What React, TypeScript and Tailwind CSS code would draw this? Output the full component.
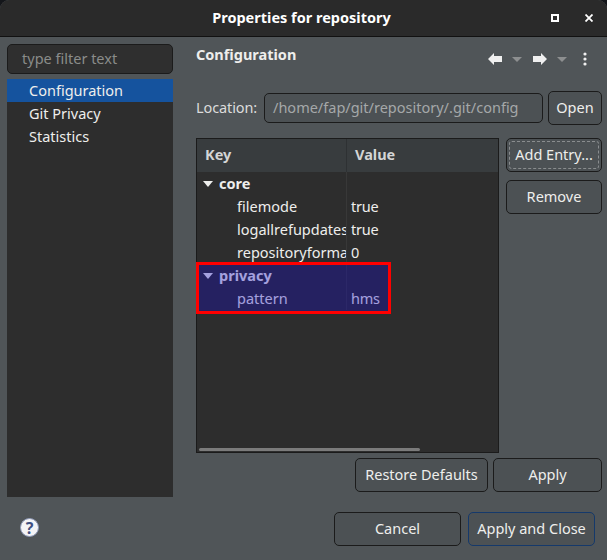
import React from "react";

function Btn({ children, className = "" }: { children: React.ReactNode; className?: string }) {
  return (
    <div className={"flex items-center justify-center rounded-[5px] border border-[#1b1b1b] bg-[#4c5154] text-[#eeeeec] text-[14.5px] h-[34px] " + className}>
      {children}
    </div>
  );
}

function Row({ k, v, bold }: { k: string; v?: string; bold?: boolean }) {
  return (
    <div className="flex h-[23px] items-center text-[14.5px] text-[#eeeeec]">
      <div className="w-[150px] shrink-0 overflow-hidden whitespace-nowrap flex items-center border-r border-[#383838] h-full">
        {bold ? (
          <>
            <svg width="10" height="6" viewBox="0 0 10 6" className="ml-[6px] mr-[6px] shrink-0"><path d="M0 0H10L5 6Z" fill="currentColor" /></svg>
            <span className="font-bold">{k}</span>
          </>
        ) : (
          <span className="ml-[40px]">{k}</span>
        )}
      </div>
      <div className="pl-[4px] tracking-[-0.2px]">{v}</div>
    </div>
  );
}

export default function App() {
  return (
    <div className="w-[607px] h-[560px] bg-[#14161a] font-['Noto_Sans',sans-serif] overflow-hidden">
      <div className="relative w-[607px] h-[560px] rounded-t-[9px] bg-[#505558] overflow-hidden flex flex-col">
        <div className="relative h-[37px] shrink-0 flex items-center justify-center pr-[4px] bg-[#2a2a2a] border-b border-[#111111] text-white font-bold text-[14.5px]">
          Properties for repository
          <div className="absolute right-[14px] top-0 h-full flex items-center gap-[26px]">
            <svg width="8" height="8" viewBox="0 0 8 8"><rect x="1" y="1" width="6" height="6" fill="none" stroke="#fff" strokeWidth="2" /></svg>
            <svg width="8" height="8" viewBox="0 0 8 8"><path d="M0.5 0.5L7.5 7.5M7.5 0.5L0.5 7.5" stroke="#fff" strokeWidth="1.8" /></svg>
          </div>
        </div>

        <div className="flex flex-1 min-h-0">
          {/* left */}
          <div className="w-[166px] ml-[7px] mt-[7px] mb-[63px] flex flex-col shrink-0">
            <div className="h-[30px] rounded-[5px] border border-[#1b1b1b] bg-[#2f2f2f] flex items-center pl-[14px] text-[14.5px] text-[#8a8c8a]">
              type filter text
            </div>
            <div className="mt-[5px] flex-1 bg-[#2d2d2d] text-[14.5px] text-[#eeeeec]">
              <div className="h-[23px] bg-[#15539e] pl-[22px] flex items-center">Configuration</div>
              <div className="h-[23px] pl-[22px] flex items-center">Git Privacy</div>
              <div className="h-[23px] pl-[22px] flex items-center">Statistics</div>
            </div>
          </div>

          {/* right */}
          <div className="ml-[23px] w-[406px] flex flex-col">
            <div className="mt-[8px] h-[20px] flex items-center justify-between">
              <span className="font-bold text-[14.5px] text-[#eeeeec]">Configuration</span>
              <div className="flex items-center mr-[15px] mt-[8px]">
                <svg width="14" height="12" viewBox="0 0 14 12"><path d="M0 6L6 0V3H14V9H6V12Z" fill="#f0f0f0" /></svg>
                <svg width="10" height="5" viewBox="0 0 10 5" className="ml-[10px]"><path d="M0 0H10L5 5Z" fill="#8d8f90" /></svg>
                <svg width="14" height="12" viewBox="0 0 14 12" className="ml-[11px]"><path d="M14 6L8 0V3H0V9H8V12Z" fill="#f0f0f0" /></svg>
                <svg width="10" height="5" viewBox="0 0 10 5" className="ml-[10px]"><path d="M0 0H10L5 5Z" fill="#8d8f90" /></svg>
                <svg width="4" height="14" viewBox="0 0 4 14" className="ml-[16px]"><circle cx="2" cy="2" r="1.6" fill="#f0f0f0" /><circle cx="2" cy="7" r="1.6" fill="#f0f0f0" /><circle cx="2" cy="12" r="1.6" fill="#f0f0f0" /></svg>
              </div>
            </div>

            <div className="mt-[26px] flex items-center">
              <span className="text-[14.5px] text-[#dcdcdc] w-[68px] tracking-[-0.1px]">Location:</span>
              <div className="w-[279px] h-[30px] rounded-[5px] border border-[#1b1b1b] bg-[#4c5154] flex items-center pl-[8px] text-[14.5px] text-[#a5a8a9] whitespace-nowrap overflow-hidden">
                /home/fap/git/repository/.git/config
              </div>
              <Btn className="ml-[5px] w-[54px]">Open</Btn>
            </div>

            <div className="mt-[13px] flex gap-[7px]">
              <div className="relative w-[303px] h-[315px] border border-[#1b1b1b] bg-[#2d2d2d] flex flex-col shrink-0 overflow-hidden">
                <div className="flex h-[33px] bg-[#383c3e] font-bold text-[14.5px] text-[#d3d5d5] items-center shrink-0">
                  <div className="w-[150px] pl-[8px] pb-[2px] h-full flex items-center border-r border-[#2e3133]">Key</div>
                  <div className="pl-[8px] pb-[2px]">Value</div>
                </div>
                <div>
                  <Row k="core" bold />
                  <Row k="filemode" v="true" />
                  <Row k="logallrefupdates" v="true" />
                  <Row k="repositoryformatversion" v="0" />
                  <Row k="privacy" bold />
                  <Row k="pattern" v="hms" />
                </div>
                <div className="absolute left-[2px] bottom-[1px] w-[221px] h-[3px] bg-[#7b7b7b] rounded-full" />
              </div>
              <div className="flex flex-col gap-[8px] w-[96px]">
                <Btn className="relative">
                  Add Entry...
                  <div className="absolute inset-[2px] border border-dashed border-[#8a8d8f] rounded-[3px]" />
                </Btn>
                <Btn>Remove</Btn>
              </div>
            </div>

            <div className="mt-[5px] flex gap-[5px]">
              <Btn className="ml-[159px] w-[133px]">Restore Defaults</Btn>
              <Btn className="w-[109px]">Apply</Btn>
            </div>

            <div className="mt-[20px] flex gap-[7px]">
              <Btn className="ml-[138px] w-[127px]">Cancel</Btn>
              <Btn className="w-[127px] !border-[#15396b]">Apply and Close</Btn>
            </div>
          </div>
        </div>

        {/* help icon */}
        <div className="absolute left-[20px] top-[518px] w-[19px] h-[19px] rounded-full bg-[#f4f4f6] border border-[#8f9ab8] flex items-center justify-center text-[#3f4f80] font-bold text-[16px] leading-none">?</div>

        {/* red annotation */}
        <div className="absolute left-[196px] top-[262px] w-[195px] h-[52px] border-[3px] border-[#ff0000] bg-[rgba(24,13,200,0.34)]" />
      </div>
    </div>
  );
}
